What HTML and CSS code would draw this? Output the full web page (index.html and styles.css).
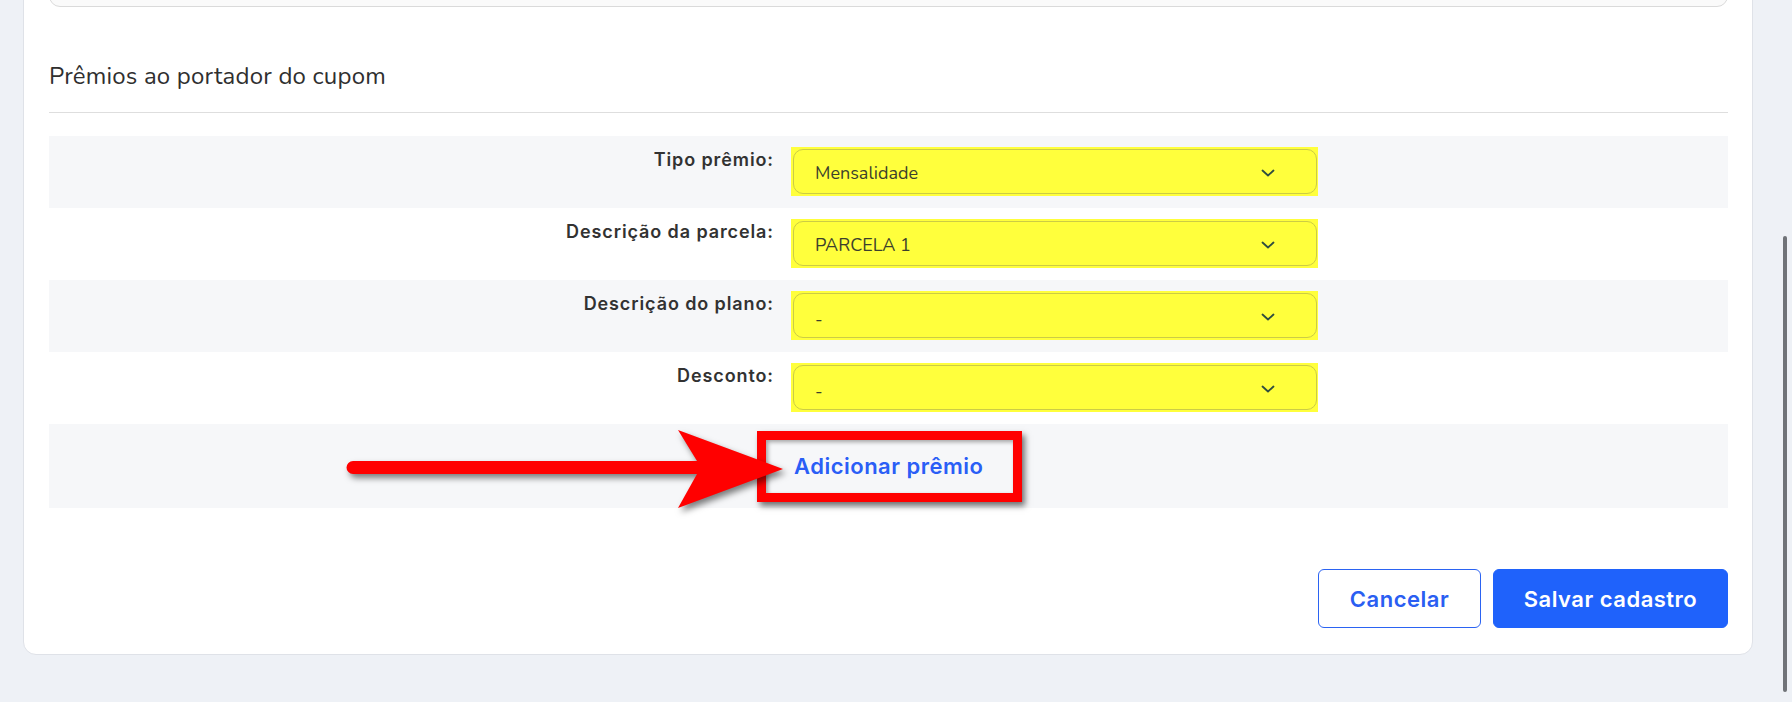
FILE: index.html
```html
<!DOCTYPE html>
<html lang="pt-BR">
<head>
<meta charset="utf-8">
<title>Prêmios ao portador do cupom</title>
<link rel="stylesheet" href="styles.css">
</head>
<body>
<div class="page">
  <main class="card">
    <div class="prev-box"></div>

    <h2 class="section-title">Prêmios ao portador do cupom</h2>

    <div class="rows">
      <div class="row shaded">
        <label class="row-label">Tipo prêmio:</label>
        <div class="hl">
          <div class="select"><span>Mensalidade</span>
            <svg class="chev" viewBox="0 0 14 8" width="14" height="8"><path d="M1.5 1.5 L7 6.5 L12.5 1.5" /></svg>
          </div>
        </div>
      </div>
      <div class="row">
        <label class="row-label">Descrição da parcela:</label>
        <div class="hl">
          <div class="select"><span>PARCELA 1</span>
            <svg class="chev" viewBox="0 0 14 8" width="14" height="8"><path d="M1.5 1.5 L7 6.5 L12.5 1.5" /></svg>
          </div>
        </div>
      </div>
      <div class="row shaded">
        <label class="row-label">Descrição do plano:</label>
        <div class="hl">
          <div class="select"><span class="dash">-</span>
            <svg class="chev" viewBox="0 0 14 8" width="14" height="8"><path d="M1.5 1.5 L7 6.5 L12.5 1.5" /></svg>
          </div>
        </div>
      </div>
      <div class="row">
        <label class="row-label">Desconto:</label>
        <div class="hl">
          <div class="select"><span class="dash">-</span>
            <svg class="chev" viewBox="0 0 14 8" width="14" height="8"><path d="M1.5 1.5 L7 6.5 L12.5 1.5" /></svg>
          </div>
        </div>
      </div>
      <div class="row shaded add-row">
        <span class="row-label"></span>
        <a class="add-link" href="#">Adicionar prêmio</a>
        <div class="mark-box"></div>
      </div>
    </div>

    <div class="actions">
      <button class="btn btn-outline" type="button">Cancelar</button>
      <button class="btn btn-primary" type="button">Salvar cadastro</button>
    </div>
  </main>

  <svg class="arrow" width="1792" height="702" viewBox="0 0 1792 702">
    <path d="M353 461 L697 461 L678 430 L783 469 L678 508 L697 474 L353 474 A6.5 6.5 0 0 1 353 461 Z" />
  </svg>

  <div class="scroll-thumb"></div>
</div>
</body>
</html>
```

FILE: styles.css
```css
* { box-sizing: border-box; }

html, body {
  margin: 0;
  padding: 0;
  height: 702px;
  overflow: hidden;
  background: #eef1f6;
}

.page {
  position: relative;
  display: flow-root;
  width: 1792px;
  height: 702px;
}

.card {
  margin: -40px 0 0 23px;
  width: 1730px;
  background: #ffffff;
  border: 1px solid #dfe2e8;
  border-radius: 0 0 13px 13px;
  padding: 9px 24px 26px 25px;
}

.prev-box {
  height: 37px;
  background: #fafafa;
  border: 1px solid #dadada;
  border-radius: 0 0 11px 11px;
}

.section-title {
  margin: 55px 0 0 0;
  padding: 0 0 22px 0;
  border-bottom: 1px solid #dedede;
  font-family: "Nunito", "Noto Sans", "Open Sans", sans-serif;
  font-weight: 400;
  font-size: 24px;
  letter-spacing: 0.2px;
  line-height: 28px;
  color: #2f2f2f;
}

.rows {
  margin-top: 23px;
}

.row {
  display: grid;
  grid-template-columns: 725px 527px 1fr;
  column-gap: 17px;
  height: 72px;
  padding-top: 11px;
  position: relative;
}

.row.shaded { background: #f6f7f9; }

.row-label {
  text-align: right;
  font-family: "Inter", "Noto Sans", sans-serif;
  font-weight: 600;
  font-size: 18px;
  letter-spacing: 0.9px;
  color: #323232;
  line-height: 22px;
  padding-top: 2px;
}

.hl {
  height: 49px;
  background: #ffff3c;
  padding: 2px 1px 2px 2px;
}

.select {
  height: 45px;
  border: 1px solid #cccc45;
  border-radius: 10px;
  background: #ffff3c;
  display: flex;
  align-items: center;
  justify-content: space-between;
  padding: 2px 41px 0 21px;
  font-family: "Nunito", "Noto Sans", "Open Sans", sans-serif;
  font-size: 18px;
  color: #3c3f2c;
}

.select .dash { padding-top: 4px; }

.chev {
  display: block;
  fill: none;
  stroke: #2f4d3f;
  stroke-width: 1.8;
  stroke-linecap: round;
  stroke-linejoin: round;
}

.add-row {
  height: 84px;
  padding-top: 0;
  align-items: center;
}

.add-link {
  padding-left: 3px;
  font-family: "Inter", "Noto Sans", sans-serif;
  font-weight: 600;
  font-size: 22px;
  letter-spacing: 0.5px;
  color: #2a5ef6;
  text-decoration: none;
  line-height: 26px;
}

.mark-box {
  position: absolute;
  left: 708px;
  top: 7px;
  width: 265px;
  height: 71px;
  border: 9px solid #ff0000;
  box-shadow: 3px 4px 6px rgba(0, 0, 0, 0.55), inset 2px 2px 4px rgba(0, 0, 0, 0.35);
}

.actions {
  display: flex;
  justify-content: flex-end;
  gap: 12px;
  margin-top: 61px;
}

.btn {
  height: 59px;
  border-radius: 6px;
  font-family: "Inter", "Noto Sans", sans-serif;
  font-weight: 600;
  font-size: 22px;
  letter-spacing: 0.5px;
  cursor: pointer;
}

.btn-outline {
  width: 163px;
  background: #ffffff;
  border: 1px solid #2b63f2;
  color: #2a5ef2;
}

.btn-primary {
  width: 235px;
  background: #1f62fb;
  border: 1px solid #1f62fb;
  color: #ffffff;
}

.arrow {
  position: absolute;
  left: 0;
  top: 0;
  pointer-events: none;
  filter: drop-shadow(3px 4px 3px rgba(0, 0, 0, 0.5));
}

.arrow path { fill: #ff0000; }

.scroll-thumb {
  position: absolute;
  left: 1783px;
  top: 236px;
  width: 4px;
  height: 456px;
  border-radius: 2px;
  background: #707378;
}
```
